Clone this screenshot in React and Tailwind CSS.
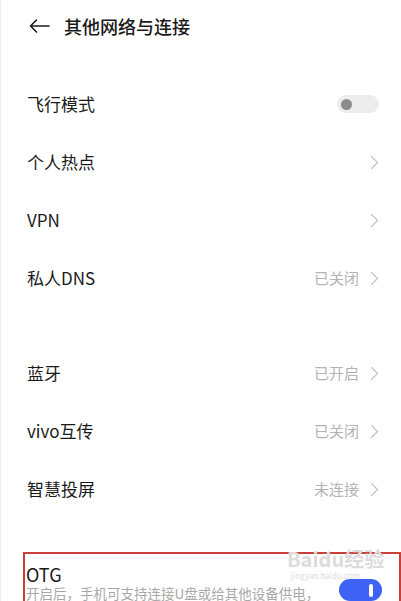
import React from 'react';

const FONT = { fontFamily: '"Noto Sans CJK SC", "Noto Sans", sans-serif' };

function Chevron() {
  return (
    <svg width="9" height="15" viewBox="0 0 9 15" fill="none" className="shrink-0">
      <path d="M1.5 1.5 L7.5 7.5 L1.5 13.5" stroke="#c4c4c4" strokeWidth="1.3" strokeLinecap="round" strokeLinejoin="round" />
    </svg>
  );
}

function Row({ label, value, toggle }) {
  return (
    <div className="h-[58px] flex items-center justify-between pl-[26px] pr-[22px]">
      <span className="text-[17px] text-[#1a1a1a]">{label}</span>
      {toggle ? (
        <div className="w-[42px] h-[18px] rounded-full bg-[#ededed] flex items-center pl-[4px]">
          <div className="w-[11px] h-[11px] rounded-full bg-[#8c8c8c]" />
        </div>
      ) : (
        <div className="flex items-center gap-[11px]">
          {value && <span className="text-[15px] text-[#b3b3b3]">{value}</span>}
          <Chevron />
        </div>
      )}
    </div>
  );
}

export default function App() {
  return (
    <div className="w-[401px] h-[601px] overflow-hidden bg-white border-l border-[#ececec]" style={FONT}>
      <header className="h-[52px] flex items-center gap-[14px] pl-[28px]">
        <svg width="21" height="14" viewBox="0 0 21 14" fill="none">
          <path d="M20 7 H1.5 M7.5 1 L1.5 7 L7.5 13" stroke="#1a1a1a" strokeWidth="1.6" strokeLinecap="round" strokeLinejoin="round" />
        </svg>
        <h1 className="text-[18px] font-medium text-[#1a1a1a]">其他网络与连接</h1>
      </header>

      <div className="mt-[23px]">
        <Row label="飞行模式" toggle />
        <Row label="个人热点" />
        <Row label="VPN" />
        <Row label="私人DNS" value="已关闭" />
      </div>

      <div className="mt-[37px]">
        <Row label="蓝牙" value="已开启" />
        <Row label="vivo互传" value="已关闭" />
        <Row label="智慧投屏" value="未连接" />
      </div>

      <div className="relative mt-[34px] ml-[22px] h-[80px] border-2 border-[#c9403a] pl-[1px] pt-[10px]">
        <div className="text-[18px] leading-[20px] text-[#1a1a1a]">OTG</div>
        <div className="text-[13.5px] leading-[17px] text-[#a8a8a8] mt-[1px] whitespace-nowrap">开启后，手机可支持连接U盘或给其他设备供电，</div>
        <div className="absolute left-[314px] top-[25px] w-[43px] h-[22px] rounded-full bg-[#3d62f5] flex items-center justify-end pr-[9px]">
          <div className="w-[4px] h-[13px] rounded-full bg-white" />
        </div>
        <div className="absolute left-[262px] top-[-6px] text-[20px] font-bold leading-[22px] text-[#dcdcdc]">Baidu经验</div>
        <div className="absolute left-[266px] top-[17px] text-[8px] leading-[9px] text-[#dcdcdc]">jingyan.baidu.com</div>
      </div>
    </div>
  );
}
